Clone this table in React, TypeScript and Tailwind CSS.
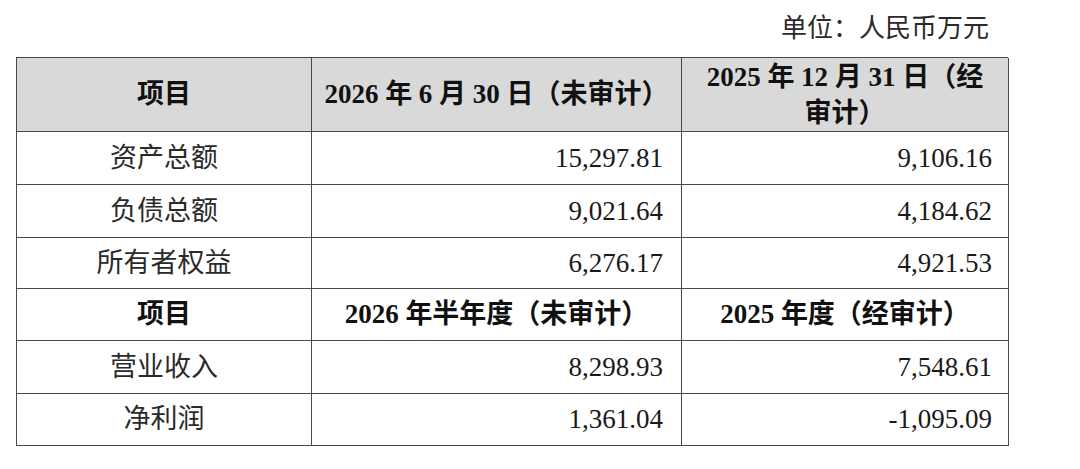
import React from "react";

const font = { fontFamily: '"Liberation Serif", "Noto Sans CJK SC", serif' };

type Row = { label: string; a: string; b: string };

const rows1: Row[] = [
  { label: "资产总额", a: "15,297.81", b: "9,106.16" },
  { label: "负债总额", a: "9,021.64", b: "4,184.62" },
  { label: "所有者权益", a: "6,276.17", b: "4,921.53" },
];
const rows2: Row[] = [
  { label: "营业收入", a: "8,298.93", b: "7,548.61" },
  { label: "净利润", a: "1,361.04", b: "-1,095.09" },
];

const cell = "border-r-[1.5px] border-b-[1.5px] border-[#4a4a4a] flex items-center";

function DataRow({ r, h }: { r: Row; h: string }) {
  return (
    <>
      <div className={`${cell} ${h} justify-center text-[#2a2a2a]`}>{r.label}</div>
      <div className={`${cell} ${h} justify-end pr-[18px] text-[#1a1a1a]`}>{r.a}</div>
      <div className={`${cell} ${h} justify-end pr-[16px] text-[#1a1a1a]`}>{r.b}</div>
    </>
  );
}

export default function App() {
  return (
    <div className="w-[1080px] h-[469px] bg-white overflow-hidden" style={font}>
      <div className="w-[992px] ml-[16px]">
        <div className="h-[57px] flex items-center justify-end pr-[19px] text-[26px] text-[#2a2a2a]">
          单位：人民币万元
        </div>
        <div className="grid grid-cols-[295px_370px_327px] border-l-[1.5px] border-t-[1.5px] border-[#4a4a4a] text-[27px] leading-none">
          <div className={`${cell} h-[74px] justify-center bg-[#d9d9d9] font-bold text-[#111]`}>项目</div>
          <div className={`${cell} h-[74px] justify-center bg-[#d9d9d9] font-bold text-[#111] whitespace-nowrap`}>
            2026 年 6 月 30 日（未审计）
          </div>
          <div className={`${cell} h-[74px] justify-center bg-[#d9d9d9] font-bold text-[#111] text-center leading-[36px]`}>
            <span>
              2025 年 12 月 31 日（经
              <br />
              审计）
            </span>
          </div>
          <DataRow r={rows1[0]} h="h-[53px]" />
          <DataRow r={rows1[1]} h="h-[53px]" />
          <DataRow r={rows1[2]} h="h-[51px]" />
          <div className={`${cell} h-[52px] justify-center font-bold text-[#111]`}>项目</div>
          <div className={`${cell} h-[52px] justify-center font-bold text-[#111] whitespace-nowrap`}>
            2026 年半年度（未审计）
          </div>
          <div className={`${cell} h-[52px] justify-center font-bold text-[#111] whitespace-nowrap`}>
            2025 年度（经审计）
          </div>
          <DataRow r={rows2[0]} h="h-[53px]" />
          <DataRow r={rows2[1]} h="h-[52px]" />
        </div>
      </div>
    </div>
  );
}
